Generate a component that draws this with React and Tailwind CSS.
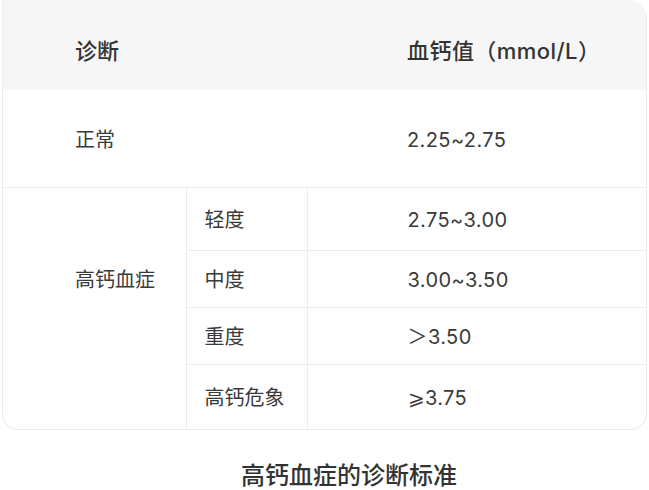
const font = { fontFamily: 'Inter, "Noto Sans CJK SC", sans-serif' };

const levels = [
  { name: '轻度', value: '2.75~3.00', h: 'h-[63px]' },
  { name: '中度', value: '3.00~3.50', h: 'h-[57px]' },
  { name: '重度', value: '＞3.50', h: 'h-[57px]' },
  { name: '高钙危象', value: '⩾3.75', h: 'h-[65px]' },
];

export default function App() {
  return (
    <div className="w-[649px] h-[490px] bg-white overflow-hidden" style={font}>
      <div className="ml-[2px] w-[645px] rounded-b-[16px] rounded-tr-[20px] border border-t-0 border-[#ececec] overflow-hidden">
        <table className="w-full border-collapse text-[#333]">
          <thead>
            <tr className="h-[90px] bg-[#f6f6f6] text-[22px]">
              <th colSpan={2} className="text-left font-medium pl-[72px] pt-[12px]">诊断</th>
              <th className="text-left font-medium pl-[100px] pt-[12px] tracking-[0.02em]">血钙值（mmol/L）</th>
            </tr>
          </thead>
          <tbody className="text-[20px] text-[#3a3a3a]">
            <tr className="h-[97px] border-b border-[#ececec]">
              <td colSpan={2} className="pl-[72px] pt-[4px] w-[304px]">正常</td>
              <td className="pl-[100px] pt-[4px] tracking-[0.02em]">2.25~2.75</td>
            </tr>
            {levels.map((l, i) => (
              <tr key={l.name} className={`${l.h} ${i < 3 ? 'border-b border-[#ececec]' : ''}`}>
                {i === 0 && (
                  <td rowSpan={4} className="w-[183px] pl-[72px] pb-[56px] border-r border-[#ececec]">高钙血症</td>
                )}
                <td className="w-[121px] pl-[18px] pt-[2px] border-r border-[#ececec]">{l.name}</td>
                <td className="pl-[100px] pt-[2px] tracking-[0.02em]">{l.value}</td>
              </tr>
            ))}
          </tbody>
        </table>
      </div>
      <div className="pl-[241px] pt-[34px] text-[24px] font-medium text-[#333] leading-none">
        高钙血症的诊断标准
      </div>
    </div>
  );
}
